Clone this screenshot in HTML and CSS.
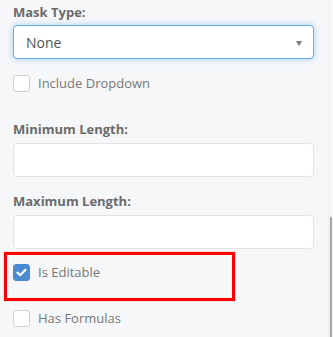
FILE: index.html
```html
<!DOCTYPE html>
<html>
<head>
<meta charset="utf-8">
<link rel="stylesheet" href="styles.css">
</head>
<body>
<div class="page">
  <div class="panel">
    <div class="field-label first">Mask Type:</div>
    <div class="select">
      <span class="select-value">None</span>
      <span class="caret"></span>
    </div>
    <div class="check-row row-include">
      <span class="box"></span>
      <span class="check-text">Include Dropdown</span>
    </div>
    <div class="field-label gap-large">Minimum Length:</div>
    <div class="text-input"></div>
    <div class="field-label">Maximum Length:</div>
    <div class="text-input"></div>
    <div class="check-row row-editable">
      <span class="box checked">
        <svg width="11" height="9" viewBox="0 0 11 9"><path d="M1.5 4.6 L4.2 7.2 L9.5 1.8" fill="none" stroke="#fff" stroke-width="2.2" stroke-linecap="round" stroke-linejoin="round"/></svg>
      </span>
      <span class="check-text">Is Editable</span>
    </div>
    <div class="check-row row-formulas">
      <span class="box"></span>
      <span class="check-text">Has Formulas</span>
    </div>
    <div class="highlight"></div>
  </div>
  <div class="scroll-track"><div class="scroll-thumb"></div></div>
</div>
</body>
</html>
```
FILE: styles.css
```css
html, body {
  margin: 0;
  padding: 0;
}
body {
  background: #f6f7f9;
  font-family: "Open Sans", "Noto Sans", sans-serif;
  width: 333px;
  height: 337px;
  overflow: hidden;
}
.page {
  display: flex;
  height: 337px;
}
.panel {
  position: relative;
  width: 330px;
  box-sizing: border-box;
  padding: 0 15px 0 13px;
  border-right: 1px solid #e9eaec;
  background: #f6f7f9;
}
.field-label {
  font-size: 13px;
  font-weight: 700;
  line-height: 18px;
  color: #6b6b6b;
  margin-top: 15px;
}
.field-label.first {
  margin-top: 3px;
}
.field-label.gap-large {
  margin-top: 28px;
}
.select {
  margin-top: 4px;
  height: 34px;
  box-sizing: border-box;
  background: #fff;
  border: 1px solid #66aee9;
  border-radius: 4px;
  box-shadow: 0 0 6px rgba(102, 175, 233, 0.55);
  display: flex;
  align-items: center;
  padding: 0 11px 0 12px;
}
.select-value {
  flex: 1;
  font-size: 14px;
  color: #555;
}
.caret {
  width: 0;
  height: 0;
  border-left: 3.5px solid transparent;
  border-right: 3.5px solid transparent;
  border-top: 5px solid #7a7a7a;
  margin-top: 2px;
}
.text-input {
  margin-top: 5px;
  height: 34px;
  box-sizing: border-box;
  background: #fff;
  border: 1px solid #e2e3e5;
  border-radius: 4px;
}
.check-row {
  display: flex;
  align-items: center;
  gap: 8px;
  height: 17px;
}
.row-include {
  margin-top: 16px;
}
.row-editable {
  margin-top: 15px;
}
.row-formulas {
  margin-top: 29px;
}
.box {
  width: 17px;
  height: 17px;
  box-sizing: border-box;
  border: 1px solid #cfd1d4;
  border-radius: 3px;
  background: #fff;
  display: flex;
  align-items: center;
  justify-content: center;
  flex: none;
}
.box.checked {
  background: #4a8bd2;
  border-color: #4a8bd2;
}
.check-text {
  font-size: 13px;
  color: #777;
  line-height: 17px;
}
.highlight {
  position: absolute;
  left: 4px;
  top: 252px;
  width: 231px;
  height: 49px;
  box-sizing: border-box;
  border: 3px solid #ff0000;
  box-shadow: 0 0 1px rgba(255, 0, 0, 0.5);
}
.scroll-track {
  width: 2px;
  position: relative;
  background: #f9f9fa;
}
.scroll-thumb {
  position: absolute;
  top: 217px;
  left: 0;
  width: 2px;
  bottom: 0;
  background: #a9a9a9;
}
```
